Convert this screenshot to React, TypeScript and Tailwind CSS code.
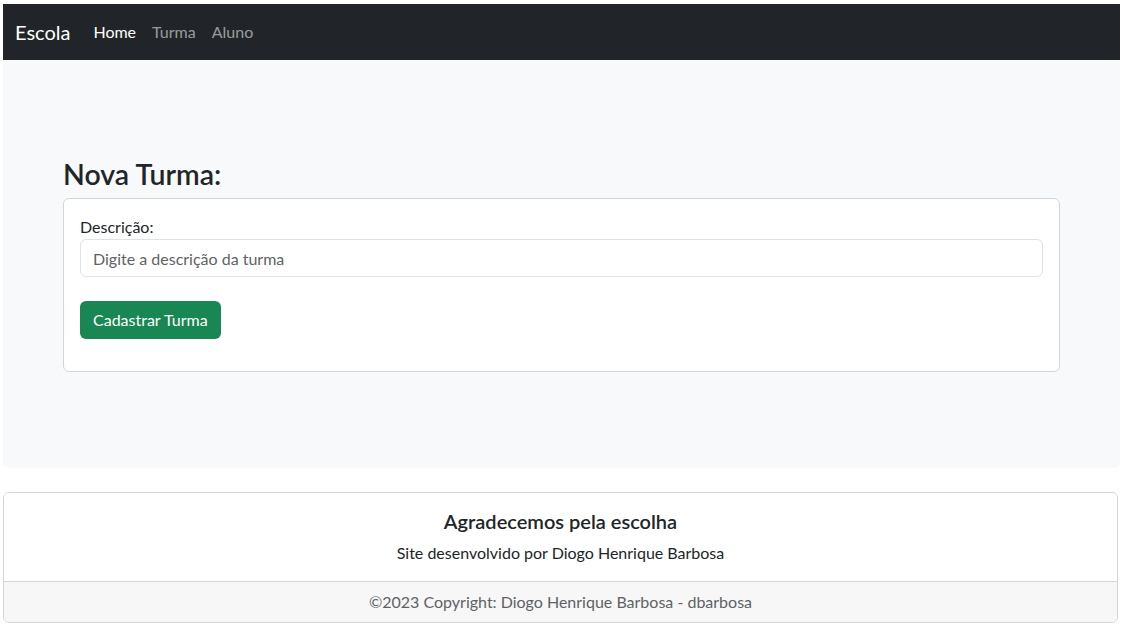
import React from "react";

export default function App() {
  return (
    <div
      className="min-h-[624px] bg-white pt-[4px] pl-[3px] pr-[4px] text-[#212529]"
      style={{ fontFamily: 'Lato, "Noto Sans", sans-serif' }}
    >
      <nav className="flex h-[56px] items-center bg-[#212529] px-[12px]">
        <span className="mr-[23px] text-[20px] text-white">Escola</span>
        <div className="flex items-center gap-[16px] text-[16px]">
          <span className="text-white">Home</span>
          <span className="text-[rgba(255,255,255,0.55)]">Turma</span>
          <span className="text-[rgba(255,255,255,0.55)]">Aluno</span>
        </div>
      </nav>

      <section className="rounded-b-[6px] bg-[#f8f9fa] px-[60px] pt-[96px] pb-[96px]">
        <h2 className="mb-[5px] text-[28.5px] font-semibold leading-[37px]">Nova Turma:</h2>
        <div className="rounded-[6px] border border-[#d3d6d9] bg-white p-[16px]">
          <label className="block text-[16px] leading-[24px]">Descrição:</label>
          <input
            className="block h-[38px] w-full rounded-[6px] border border-[#dee2e6] px-[12px] text-[16px] outline-none placeholder:text-[#5f6265]"
            placeholder="Digite a descrição da turma"
          />
          <button className="mt-[24px] mb-[16px] h-[38px] rounded-[6px] bg-[#198754] px-[13px] text-[16px] text-white">
            Cadastrar Turma
          </button>
        </div>
      </section>

      <div className="mt-[24px] mr-[2px] overflow-hidden rounded-[6px] border border-[#d3d6d9]">
        <div className="bg-white p-[16px] text-center">
          <h5 className="mb-[8px] text-[20px] font-semibold leading-[24px]">Agradecemos pela escolha</h5>
          <p className="text-[16px] leading-[24px]">Site desenvolvido por Diogo Henrique Barbosa</p>
        </div>
        <div className="border-t border-[#d3d6d9] bg-[#f7f7f7] py-[8px] text-center text-[16px] leading-[24px] text-[#5f6265]">
          ©2023 Copyright: Diogo Henrique Barbosa - dbarbosa
        </div>
      </div>
    </div>
  );
}
